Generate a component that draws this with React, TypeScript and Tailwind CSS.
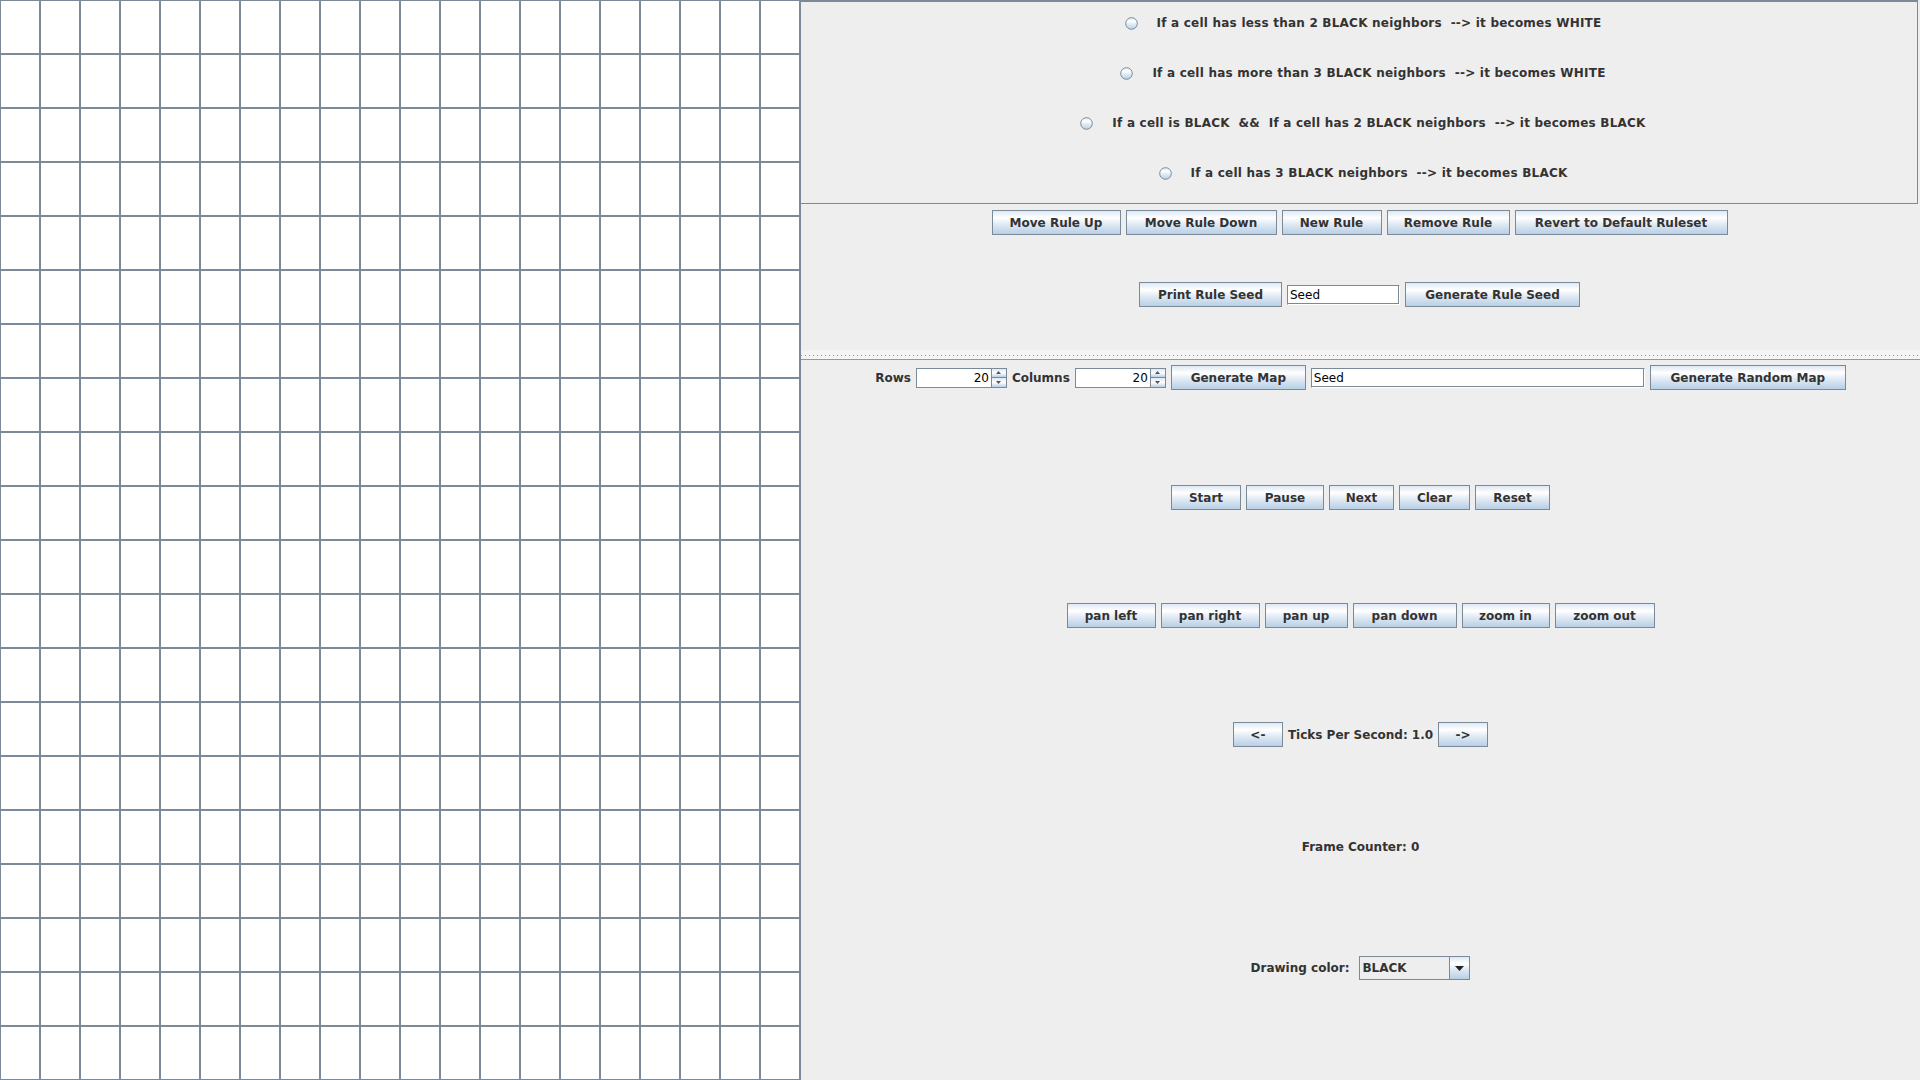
import React from "react";

const rows = Array.from({ length: 20 });
const cols = Array.from({ length: 20 });

const rules = [
  "If a cell has less than 2 BLACK neighbors  --> it becomes WHITE",
  "If a cell has more than 3 BLACK neighbors  --> it becomes WHITE",
  "If a cell is BLACK  &&  If a cell has 2 BLACK neighbors  --> it becomes BLACK",
  "If a cell has 3 BLACK neighbors  --> it becomes BLACK",
];

const Btn = ({ label, w }: { label: string; w: string }) => (
  <div
    className={`${w} h-[25px] shrink-0 border border-[#7A8A99] bg-[linear-gradient(to_bottom,#DDE8F3_0%,#FFFFFF_30%,#DDE8F3_60%,#B8CFE5_100%)] flex items-center justify-center font-bold text-[12px] leading-none text-[#333333] whitespace-pre`}
  >
    {label}
  </div>
);

const Field = ({ value, w }: { value: string; w: string }) => (
  <div
    className={`${w} h-[20px] shrink-0 border border-[#7A8A99] border-r-white border-b-white shadow-[inset_-1px_-1px_0_#7A8A99] bg-white flex items-center px-[2px] text-[12px] text-black`}
  >
    {value}
  </div>
);

const Spinner = () => (
  <div className="w-[91px] h-[20px] shrink-0 flex border border-[#7A8A99] bg-white">
    <div className="flex-1 flex items-center justify-end pr-[2px] text-[12px] text-black">20</div>
    <div className="w-[15px] flex flex-col border-l border-[#7A8A99]">
      <div className="flex-1 flex items-center justify-center border-b border-[#7A8A99] bg-[linear-gradient(to_bottom,#DDE8F3,#FFFFFF,#B8CFE5)]">
        <svg width="5" height="3" viewBox="0 0 5 3">
          <path d="M2.5 0 L5 3 L0 3 Z" fill="#555" />
        </svg>
      </div>
      <div className="flex-1 flex items-center justify-center bg-[linear-gradient(to_bottom,#DDE8F3,#FFFFFF,#B8CFE5)]">
        <svg width="5" height="3" viewBox="0 0 5 3">
          <path d="M0 0 L5 0 L2.5 3 Z" fill="#555" />
        </svg>
      </div>
    </div>
  </div>
);

const Radio = () => (
  <svg width="13" height="13" viewBox="0 0 13 13" className="shrink-0">
    <defs>
      <linearGradient id="rg" x1="0" y1="0" x2="0" y2="1">
        <stop offset="0" stopColor="#DDE8F3" />
        <stop offset="0.3" stopColor="#FFFFFF" />
        <stop offset="0.6" stopColor="#DDE8F3" />
        <stop offset="1" stopColor="#B8CFE5" />
      </linearGradient>
    </defs>
    <circle cx="6.5" cy="6.5" r="5.8" fill="url(#rg)" stroke="#7A8A99" strokeWidth="1" />
  </svg>
);

const App = () => {
  return (
    <div className="w-[1920px] h-[1080px] overflow-hidden flex bg-[#EEEEEE] font-['DejaVu_Sans',sans-serif] text-[#333333]">
      {/* board */}
      <div className="w-[801px] h-[1080px] shrink-0 overflow-hidden border-l border-t border-[#7A8A99] bg-white grid grid-cols-[repeat(20,40px)] grid-rows-[repeat(20,54px)]">
        {rows.map((_, r) =>
          cols.map((_, c) => (
            <div key={`${r}-${c}`} className="border-r-2 border-b-2 border-[#7A8A99]" />
          ))
        )}
      </div>

      {/* controls */}
      <div className="flex-1 flex flex-col">
        {/* top half */}
        <div className="h-[350px] flex flex-col">
          <div className="w-[1117px] h-[204px] border-t-2 border-r border-b border-[#7A8A99] flex flex-col gap-[10px] pt-[1px] pl-[8px]">
            {rules.map((rule) => (
              <div key={rule} className="h-[40px] flex items-center justify-center gap-[19px]">
                <Radio />
                <span className="font-bold text-[12px] tracking-[0.22px] whitespace-pre">{rule}</span>
              </div>
            ))}
          </div>

          <div className="mt-[6px] flex justify-center gap-[5px] w-[1117px]">
            <Btn label="Move Rule Up" w="w-[129px]" />
            <Btn label="Move Rule Down" w="w-[151px]" />
            <Btn label="New Rule" w="w-[100px]" />
            <Btn label="Remove Rule" w="w-[123px]" />
            <Btn label="Revert to Default Ruleset" w="w-[213px]" />
          </div>

          <div className="mt-[47px] flex items-center justify-center gap-[5px] w-[1117px]">
            <Btn label="Print Rule Seed" w="w-[143px]" />
            <Field value="Seed" w="w-[113px]" />
            <Btn label="Generate Rule Seed" w="w-[175px]" />
          </div>
        </div>

        {/* divider */}
        <div className="h-[10px] bg-[#F4F4F4] border-b border-[#8A9AAA] flex flex-col pt-[5px]">
          <div className="h-[1px] bg-[repeating-linear-gradient(90deg,#8DA0B3_0px,#8DA0B3_1px,transparent_1px,transparent_4px)]" />
        </div>

        {/* bottom half */}
        <div className="flex-1 flex flex-col">
          <div className="h-[120px] pt-[5px] flex items-start justify-center">
            <div className="flex items-center gap-[5px] h-[25px]">
              <span className="font-bold text-[12px]">Rows</span>
              <Spinner />
              <span className="font-bold text-[12px]">Columns</span>
              <Spinner />
              <Btn label="Generate Map" w="w-[135px]" />
              <Field value="Seed" w="w-[334px]" />
              <Btn label="Generate Random Map" w="w-[196px]" />
            </div>
          </div>

          <div className="h-[118px] pt-[5px] flex items-start justify-center gap-[5px]">
            <Btn label="Start" w="w-[70px]" />
            <Btn label="Pause" w="w-[78px]" />
            <Btn label="Next" w="w-[65px]" />
            <Btn label="Clear" w="w-[71px]" />
            <Btn label="Reset" w="w-[75px]" />
          </div>

          <div className="h-[119px] pt-[5px] flex items-start justify-center gap-[5px]">
            <Btn label="pan left" w="w-[89px]" />
            <Btn label="pan right" w="w-[99px]" />
            <Btn label="pan up" w="w-[83px]" />
            <Btn label="pan down" w="w-[104px]" />
            <Btn label="zoom in" w="w-[88px]" />
            <Btn label="zoom out" w="w-[100px]" />
          </div>

          <div className="h-[117px] pt-[5px] flex items-start justify-center">
            <div className="flex items-center gap-[5px] h-[25px]">
              <Btn label="<-" w="w-[50px]" />
              <span className="font-bold text-[12px]">Ticks Per Second: 1.0</span>
              <Btn label="->" w="w-[50px]" />
            </div>
          </div>

          <div className="h-[117px] pt-[5px] flex items-start justify-center">
            <span className="h-[16px] flex items-center font-bold text-[12px]">Frame Counter: 0</span>
          </div>

          <div className="pt-[5px] flex items-start justify-center">
            <div className="flex items-center gap-[10px] h-[24px]">
              <span className="font-bold text-[12px]">Drawing color:</span>
              <div className="w-[111px] h-[24px] flex border border-[#7A8A99] bg-[#EEEEEE]">
                <div className="flex-1 flex items-center pl-[2px] font-bold text-[12px]">BLACK</div>
                <div className="w-[20px] flex items-center justify-center border-l border-[#7A8A99] bg-[linear-gradient(to_bottom,#DDE8F3_0%,#FFFFFF_30%,#DDE8F3_60%,#B8CFE5_100%)]">
                  <svg width="9" height="5" viewBox="0 0 9 5">
                    <path d="M0 0 L9 0 L4.5 5 Z" fill="#222" />
                  </svg>
                </div>
              </div>
            </div>
          </div>
        </div>
      </div>
    </div>
  );
};

export default App;
